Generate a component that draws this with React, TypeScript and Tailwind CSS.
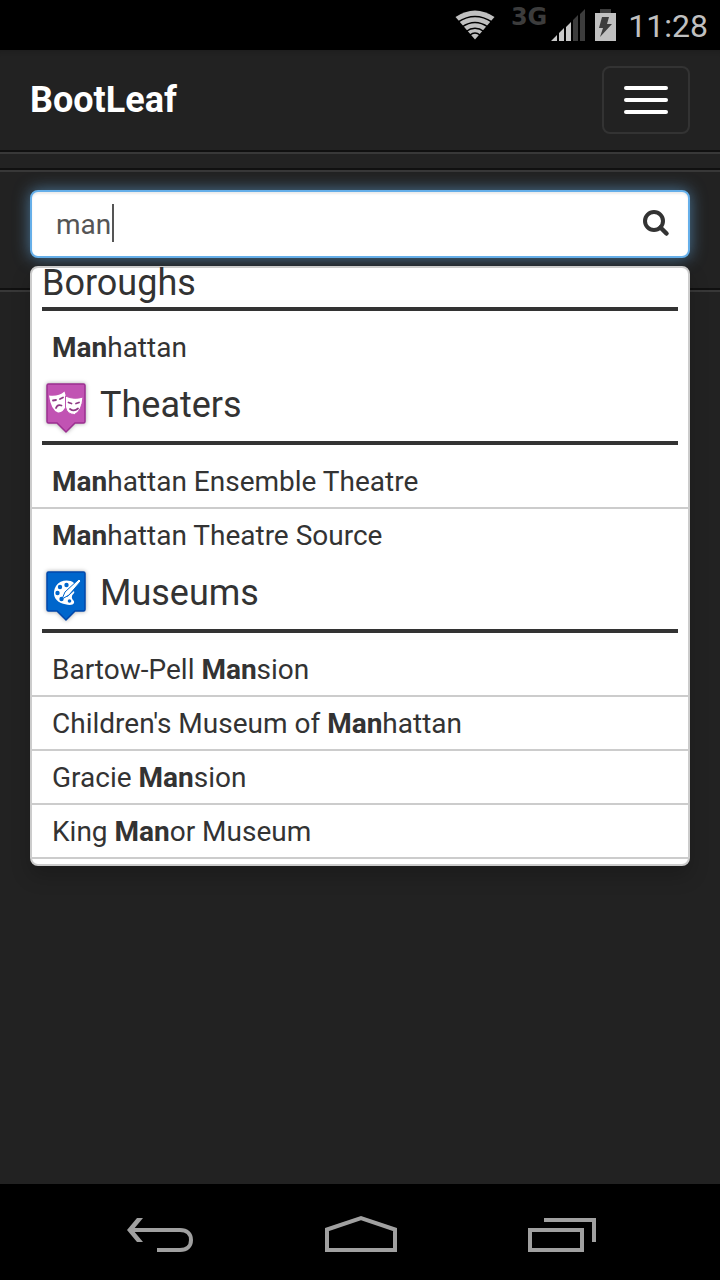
import { useState } from "react";

type Group = { name: string; icon?: "theater" | "museum"; items: string[] };

const groups: Group[] = [
  { name: "Boroughs", items: ["Manhattan"] },
  {
    name: "Theaters",
    icon: "theater",
    items: ["Manhattan Ensemble Theatre", "Manhattan Theatre Source"],
  },
  {
    name: "Museums",
    icon: "museum",
    items: [
      "Bartow-Pell Mansion",
      "Children's Museum of Manhattan",
      "Gracie Mansion",
      "King Manor Museum",
    ],
  },
];

function StatusBar() {
  return (
    <header className="flex h-[50px] shrink-0 items-center justify-end bg-black pr-3 text-[#c0c0c0]">
      <svg width="40" height="30" viewBox="0 0 40 30" className="mr-4" aria-label="Wi-Fi">
        <path d="M0.500 7Q20 -6 39.500 7L20 29.500Z" fill="#c0c0c0" />
        <g fill="none" stroke="#000" strokeWidth="1.5">
          <path d="M3 12Q20 1 37 12" />
          <path d="M7 17Q20 8 33 17" />
          <path d="M11 21.500Q20 15 29 21.500" />
          <path d="M15 25Q20 21 25 25" />
        </g>
      </svg>
      <span className="mb-4 font-['DejaVu_Sans',sans-serif] text-2xl leading-6 font-bold text-[#3c3c3c]">
        3G
      </span>
      <svg width="34" height="32" viewBox="0 0 34 32" className="ml-1 mr-2.5" aria-label="Signal">
        <path d="M0 32L6 26V32ZM8 24L13 19V32H8ZM15 18L20 13V32H15Z" fill="#c8c8c8" />
        <path d="M22 11L27 6V32H22ZM29 5L34 0V32H29Z" fill="#3c3c3c" />
      </svg>
      <svg width="21" height="32" viewBox="0 0 21 32" className="mr-3" aria-label="Charging">
        <path d="M5 0H16V4H5Z" fill="#3c3c3c" />
        <path d="M0 4H21V32H0Z" fill="#c0c0c0" />
        <path d="M7 8H14L12 15H17L5 28L8 19H4Z" fill="#3c3c3c" />
      </svg>
      <time className="pt-0.5 text-[32px] leading-10">11:28</time>
    </header>
  );
}

function Pin({ kind }: { kind: "theater" | "museum" }) {
  const theater = kind === "theater";
  return (
    <svg
      width="48"
      height="54"
      viewBox="0 0 48 54"
      className="mt-1.5 shrink-0 drop-shadow-[0_0_2px_rgba(0,0,0,0.35)]"
      aria-hidden="true"
    >
      <path
        d="M6.500 3H41.500Q43 3 43 4.500V40.500Q43 42 41.500 42H33L24 51L15 42H6.500Q5 42 5 40.500V4.500Q5 3 6.500 3Z"
        fill={theater ? "#c153b3" : "#0066cc"}
        stroke={theater ? "#9c2f91" : "#0047ab"}
        strokeWidth="1.500"
      />
      {theater ? (
        <g>
          <path
            d="M7 14.500Q16 16 22.500 10.500Q25 18 24.500 24Q21 32 16 31.500Q9 29 7 14.500Z"
            fill="#fff"
          />
          <path
            d="M23.500 15Q32 19 41 16Q40 30 32.500 33.500Q25 33.500 23.500 26Z"
            fill="#fff"
            stroke="#c153b3"
            strokeWidth="1"
          />
          <g fill="none" stroke="#8e3984" strokeWidth="1.800" strokeLinecap="round">
            <path d="M11 19.500L14 19M18 18L21 16.500M14 27Q15.500 23 19.500 24.500" />
            <path d="M26.500 21.500L29.500 22.500M34 22.500L37 21.500M28 28Q32 31 36 27.500" />
          </g>
        </g>
      ) : (
        <g>
          <path
            d="M32 14C27 10 18 11 14 17C10 24 12 31 19 34C24 36 31 37 32 34C33 31 29 31 30 27C31 24 33 25 32 22L25 28L22 25L32 16Z"
            fill="#fff"
          />
          <g fill="#0066cc">
            <circle cx="24.500" cy="16" r="2.200" />
            <circle cx="18" cy="18" r="2.200" />
            <circle cx="15.500" cy="24" r="2.200" />
            <circle cx="19.500" cy="30" r="2.200" />
            <circle cx="27.500" cy="32" r="1.800" />
          </g>
          <path d="M37 10L39 12L27 26L20 30L23 23Z" fill="#fff" stroke="#0066cc" strokeWidth="1" />
        </g>
      )}
    </svg>
  );
}

function Highlight({ text, query }: { text: string; query: string }) {
  const at = query ? text.toLowerCase().indexOf(query.toLowerCase()) : -1;
  if (at < 0) return <>{text}</>;
  return (
    <>
      {text.slice(0, at)}
      <strong className="font-bold">{text.slice(at, at + query.length)}</strong>
      {text.slice(at + query.length)}
    </>
  );
}

function Suggestions({ query }: { query: string }) {
  return (
    <div className="absolute inset-x-0 top-full mt-2 rounded-lg border-2 border-[#ccc] bg-white pb-[5px] text-[#333] shadow-[0_10px_20px_rgba(0,0,0,0.2)]">
      {groups.map((group) => (
        <section key={group.name}>
          <h3
            className={`mx-2.5 mb-2.5 flex items-center border-b-4 border-[#333] text-4xl leading-10 ${
              group.icon ? "h-[72px] gap-2.5 pb-1" : "h-[43px] pb-2.5"
            }`}
          >
            {group.icon && <Pin kind={group.icon} />}
            {group.name}
          </h3>
          <ul>
            {group.items.map((item, i) => (
              <li
                key={item}
                className={
                  i < group.items.length - 1 || group.name === "Museums"
                    ? "border-b-2 border-[#ccc]"
                    : ""
                }
              >
                <button
                  type="button"
                  className="block h-[52px] w-full px-5 pt-0.5 text-left text-[28px] leading-10"
                >
                  <Highlight text={item} query={query} />
                </button>
              </li>
            ))}
          </ul>
        </section>
      ))}
    </div>
  );
}

function NavigationBar() {
  return (
    <footer className="flex h-24 shrink-0 items-center justify-between bg-black pt-1 pr-[124px] pl-[126px]">
      <button type="button" aria-label="Back">
        <svg width="68" height="40" viewBox="0 0 68 40" fill="none" stroke="#a0a0a0" strokeWidth="4">
          <path d="M31 36H54C61 36 65 32 65 26C65 20 61 16 54 16H5" />
          <path d="M1 16L11 4H17L7 16L17 28H11Z" fill="#a0a0a0" stroke="none" />
        </svg>
      </button>
      <button type="button" aria-label="Home">
        <svg width="72" height="40" viewBox="0 0 72 40" fill="none" stroke="#a0a0a0" strokeWidth="4">
          <path d="M2 36V15.500L36 4L70 15.500V36Z" />
        </svg>
      </button>
      <button type="button" aria-label="Recent apps">
        <svg width="68" height="40" viewBox="0 0 68 40" fill="none" stroke="#a0a0a0" strokeWidth="4">
          <path d="M2 16H54V36H2ZM16 6H66V28" />
        </svg>
      </button>
    </footer>
  );
}

export default function App() {
  const [query, setQuery] = useState("man");
  return (
    <div className="flex min-h-screen flex-col bg-[#222] font-[Roboto,sans-serif]">
      <StatusBar />
      <nav className="border-b-2 border-[#383838] shadow-[inset_0_6px_4px_-4px_rgba(0,0,0,0.15)]">
        <div className="flex h-[102px] items-center justify-between border-b-2 border-[#101010] px-[30px]">
          <a href="#" className="text-4xl leading-10 font-bold text-white">
            BootLeaf
          </a>
          <button
            type="button"
            aria-label="Toggle navigation"
            className="flex h-[68px] w-[88px] flex-col items-center justify-center gap-2 rounded-lg border-2 border-[#333]"
          >
            <span className="h-1 w-11 rounded-xs bg-white" />
            <span className="h-1 w-11 rounded-xs bg-white" />
            <span className="h-1 w-11 rounded-xs bg-white" />
          </button>
        </div>
      </nav>
      <div className="mt-3.5 border-y-2 border-t-[#101010] border-b-[#383838]">
        <form
          role="search"
          onSubmit={(e) => e.preventDefault()}
          className="border-y-2 border-t-[#383838] border-b-[#101010] px-[30px] pt-[18px] pb-[30px]"
        >
          <div className="relative">
            <div className="relative flex h-[68px] items-center rounded-lg border-2 border-[#66afe9] bg-white shadow-[inset_0_2px_2px_rgba(0,0,0,0.075),0_0_16px_rgba(102,175,233,0.6)]">
              <input
                type="text"
                aria-label="Search"
                value={query}
                onChange={(e) => setQuery(e.target.value)}
                className="h-full min-w-0 flex-1 bg-transparent pl-6 text-[28px] text-[#555] outline-none"
              />
              <span className="absolute top-3 left-20 h-[38px] w-0.5 bg-[#555]" />
              <button type="submit" aria-label="Search" className="mr-[18px]">
                <svg width="28" height="28" viewBox="0 0 28 28" fill="none" stroke="#333" strokeWidth="4">
                  <circle cx="12" cy="11" r="9" />
                  <path d="M18.500 17.500L24.500 23.500" strokeWidth="4.500" strokeLinecap="round" />
                </svg>
              </button>
            </div>
            <Suggestions query={query} />
          </div>
        </form>
      </div>
      <main className="flex-1" />
      <NavigationBar />
    </div>
  );
}
